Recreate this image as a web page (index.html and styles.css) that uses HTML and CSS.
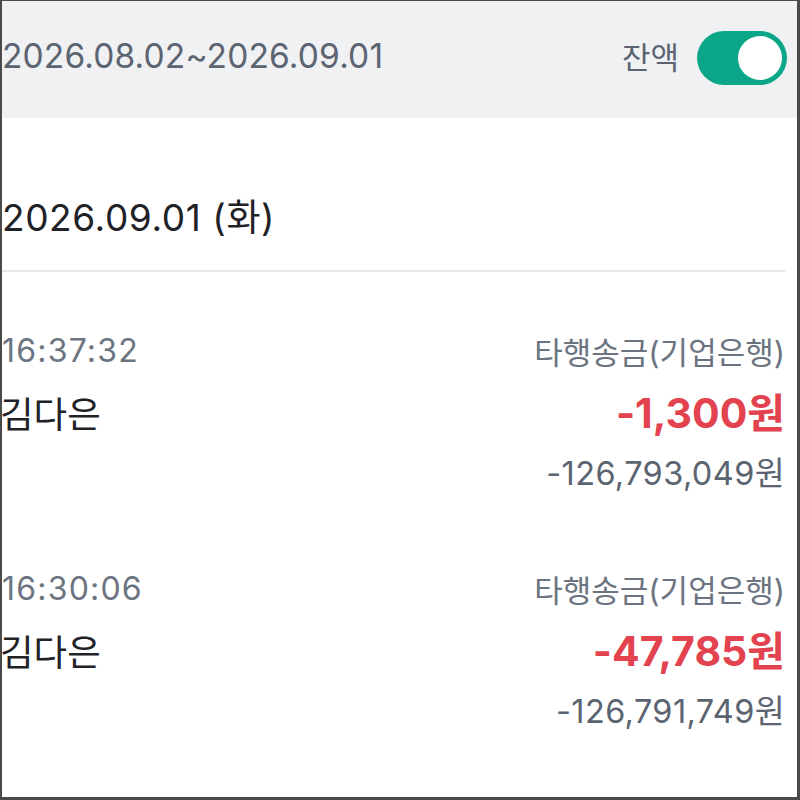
FILE: index.html
```html
<!DOCTYPE html>
<html lang="ko">
<head>
    <meta charset="UTF-8">
    <meta name="viewport" content="width=device-width, initial-scale=1.0">
    <title>거래내역</title>
    <link rel="stylesheet" href="styles.css">
</head>
<body>
    <div class="screen">
        <div class="filter-bar">
            <span class="period">2026.08.02~2026.09.01</span>
            <div class="balance-toggle">
                <span class="toggle-label">잔액</span>
                <span class="switch on"><span class="knob"></span></span>
            </div>
        </div>

        <div class="day-header">
            <h2>2026.09.01 (화)</h2>
        </div>

        <ul class="tx-list">
            <li class="tx">
                <div class="tx-line">
                    <span class="tx-time">16:37:32</span>
                    <span class="tx-type">타행송금(기업은행)</span>
                </div>
                <div class="tx-line main">
                    <span class="tx-name">김다은</span>
                    <span class="tx-amount">-1,300원</span>
                </div>
                <div class="tx-line">
                    <span></span>
                    <span class="tx-balance">-126,793,049원</span>
                </div>
            </li>
            <li class="tx">
                <div class="tx-line">
                    <span class="tx-time">16:30:06</span>
                    <span class="tx-type">타행송금(기업은행)</span>
                </div>
                <div class="tx-line main">
                    <span class="tx-name">김다은</span>
                    <span class="tx-amount">-47,785원</span>
                </div>
                <div class="tx-line">
                    <span></span>
                    <span class="tx-balance">-126,791,749원</span>
                </div>
            </li>
        </ul>
    </div>
</body>
</html>
```

FILE: styles.css
```css
* {
    box-sizing: border-box;
}

body {
    margin: 0;
    font-family: Inter, "Noto Sans CJK KR", sans-serif;
    background: #ffffff;
}

.screen {
    width: 800px;
    height: 800px;
    overflow: hidden;
    border-style: solid;
    border-color: #4a4a4a;
    border-width: 1px 3px 3px 2px;
    background: #ffffff;
}

.filter-bar {
    height: 117px;
    background: #eff1f3;
    display: flex;
    justify-content: space-between;
    align-items: center;
    padding: 0 10px 8px 0;
}

.period {
    font-size: 33.5px;
    color: #5b6470;
    letter-spacing: 0.15px;
}

.balance-toggle {
    display: flex;
    align-items: center;
    gap: 18px;
}

.toggle-label {
    font-size: 31px;
    color: #5b6470;
}

.switch {
    width: 90px;
    height: 54px;
    border-radius: 27px;
    background: #0ba688;
    display: flex;
    align-items: center;
    padding: 0 5px;
    margin-top: 4px;
}

.switch.on {
    justify-content: flex-end;
}

.knob {
    width: 44px;
    height: 44px;
    border-radius: 50%;
    background: #ffffff;
}

.day-header {
    margin-right: 12px;
    padding: 80px 0 32px 0;
    border-bottom: 2px solid #e6e7e9;
}

.day-header h2 {
    margin: 0;
    font-size: 37px;
    font-weight: 400;
    line-height: 40px;
    color: #1f2227;
    letter-spacing: 0.6px;
}

.tx-list {
    list-style: none;
    margin: 0;
    padding: 48px 12px 0 0;
}

.tx {
    margin-bottom: 58px;
}

.tx-line {
    height: 60px;
    display: flex;
    justify-content: space-between;
    align-items: center;
}

.tx-line.main {
    align-items: baseline;
}

.tx-time {
    font-size: 32px;
    color: #6b7480;
    letter-spacing: 1.2px;
}

.tx-type {
    font-size: 31px;
    color: #6b7480;
}

.tx-name {
    font-size: 36.5px;
    color: #1f2227;
    margin-left: -2px;
}

.tx-amount {
    font-size: 41px;
    font-weight: 700;
    color: #e2434f;
}

.tx-balance {
    font-size: 32.5px;
    color: #5b6470;
    letter-spacing: 0.4px;
}
```
